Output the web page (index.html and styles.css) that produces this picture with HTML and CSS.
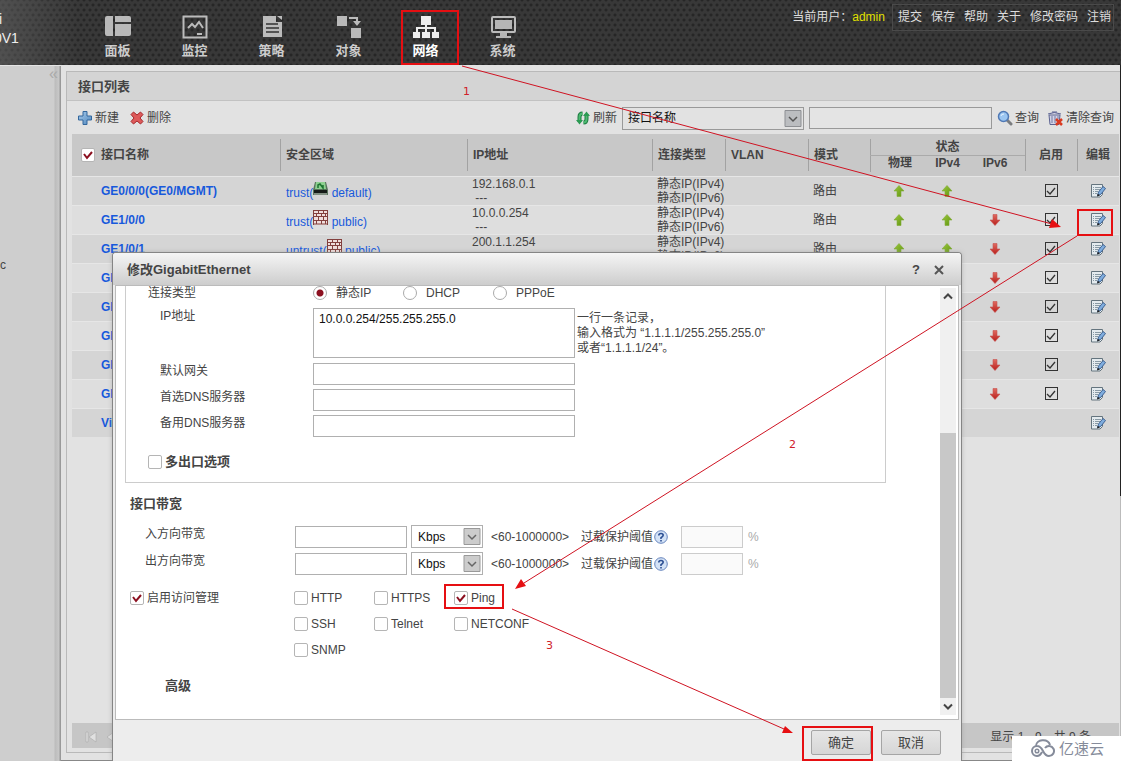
FILE: index.html
```html
<!DOCTYPE html>
<html lang="zh-CN">
<head>
<meta charset="utf-8">
<title>接口列表</title>
<link rel="stylesheet" href="styles.css">
</head>
<body>
<svg class="defs" aria-hidden="true">
  <defs>
    <linearGradient id="green" x1="0" y1="0" x2="1" y2="1"><stop offset="0" stop-color="#9cc83c"/><stop offset="1" stop-color="#5f9410"/></linearGradient>
    <linearGradient id="redg" x1="0" y1="0" x2="0" y2="1"><stop offset="0" stop-color="#e06a60"/><stop offset="1" stop-color="#b81f1c"/></linearGradient>
    <linearGradient id="blue" x1="0" y1="0" x2="1" y2="1"><stop offset="0" stop-color="#a9cdec"/><stop offset="1" stop-color="#4f86bd"/></linearGradient>
    <symbol id="up" viewBox="0 0 12 12"><path d="M6 .5 11 6H8v5.500H4V6H1z" fill="url(#green)" stroke="#7fab35" stroke-width=".6"/></symbol>
    <symbol id="down" viewBox="0 0 12 12"><path d="M6 11.500 11 6H8V.5H4V6H1z" fill="url(#redg)" stroke="#c85450" stroke-width=".6"/></symbol>
    <symbol id="edit" viewBox="0 0 16 16"><path d="M1.500 1.500h11v10l-2.500 2.500H1.500z" fill="#e4ebef" stroke="#64747e"/><path d="M5 4.500h6M5 6.500h5M5 8.500h3M5 10.500h2M3 4.500h1M3 6.500h1M3 8.500h1M3 10.500h1" stroke="#899aa5"/><path d="M7.500 12.500 8.500 9 13 3.500l2.500 2-4.500 5.700z" fill="#7fadde" stroke="#35598a" stroke-width=".9"/><path d="m7 13.500.8-2.800 2.200 1.700z" fill="#222"/></symbol>
    <symbol id="wall" viewBox="0 0 15 15"><path d="M.5.5h14v14H.5z" fill="#f0dedc"/><path d="M0 .5h15M0 3.500h15M0 6.500h15M0 10.500h15M0 14h15M.5 0v15M14.500 0v15M5.500 1v3m5-3v3M3.500 4v3m5-3v3m4-3v3M5.500 7v3m5-3v3M3.500 10v4m5-4v4m4-4v4" stroke="#83403d"/></symbol>
    <symbol id="device" viewBox="0 0 15 15"><path d="M2 1h11l2 8v5H0V9z" fill="#58745b"/><path d="M3 1h9l1 7H2z" fill="#8ed090"/><path d="M5 7V4l2-1 3 4V4" fill="none" stroke="#1d7430" stroke-width="1.500"/><path d="M1 9h13v3H1z" fill="#151a17"/><path d="M1 13h13" stroke="#aaa"/></symbol>
  </defs>
</svg>

<header class="top">
  <div class="brand"><span>i</span><span>0V1</span></div>
  <nav class="nav">
    <a href="#"><svg viewBox="0 0 28 24"><path d="M1 3q0-2 2-2h6v20H3q-2 0-2-2zM11 1h14q2 0 2 2v4H11zM11 9h16v10q0 2-2 2H11z" fill="#b9b9b9"/></svg>面板</a>
    <a href="#"><svg viewBox="0 0 28 24"><path d="M2.500 1.500h23v21h-23z" fill="none" stroke="#bbb" stroke-width="2"/><path d="m7 13 4-4 3 3 4-5 4 6M16 19h5" fill="none" stroke="#bbb" stroke-width="2"/></svg>监控</a>
    <a href="#"><svg viewBox="0 0 28 24"><path d="M5 1h13v6h6v15H5zM19 1h5v4z" fill="#bbb"/><path d="M8 9h12M8 13h13M8 17h13" stroke="#333" stroke-width="1.500"/></svg>策略</a>
    <a href="#"><svg viewBox="0 0 28 24"><path d="M2 1h10v10H2zM16 13h10v10H16z" fill="#b9b9b9"/><path d="M14 3h8v4" fill="none" stroke="#bbb" stroke-width="2"/><path d="M18 6h8l-4 5z" fill="#bbb"/></svg>对象</a>
    <a href="#" class="active"><svg viewBox="0 0 28 24"><path d="M9 1h10v9H9zM1 17h7v6H1zM10 17h8v6h-8zM20 17h7v6h-7z" fill="#eee"/><path d="M14 8v9M5 17v-4h18v4" fill="none" stroke="#eee" stroke-width="2"/></svg>网络</a>
    <a href="#"><svg viewBox="0 0 28 24"><rect x="3" y="2" width="23" height="15" rx="1" fill="none" stroke="#bbb" stroke-width="2"/><path d="M6 5h17v9H6zM11 18h7v3h4v2H7v-2h4z" fill="#b5b5b5"/></svg>系统</a>
  </nav>
  <div class="user">
    <span>当前用户：<b>admin</b></span>
    <div class="links"><a href="#">提交</a><a href="#">保存</a><a href="#">帮助</a><a href="#">关于</a><a href="#">修改密码</a><a href="#">注销</a></div>
  </div>
</header>

<div class="main">
  <aside class="side"><span class="fold">«</span><span class="tree">c</span></aside>
  <main class="content">
    <section class="panel">
      <h1>接口列表</h1>
      <div class="tools">
        <button type="button" class="tool"><svg viewBox="0 0 14 14"><path d="M5 .5h4V5h4.500v4H9v4.500H5V9H.5V5H5z" fill="url(#blue)" stroke="#33679d"/></svg>新建</button>
        <button type="button" class="tool"><svg viewBox="0 0 14 14"><path d="m1 3.500 2.500-2.500L7 4l3.500-3L13 3.500 10 7l3 3.500-2.500 2.500L7 10l-3.500 3L1 10.500 4 7z" fill="#dd5a5a" stroke="#a52a2d"/></svg>删除</button>
        <span class="space"></span>
        <button type="button" class="tool"><svg viewBox="0 0 14 14"><path d="M3.500 11V6q0-3.500 3-3.500M10.500 3v5q0 3.500-3 3.500" fill="none" stroke="#1c7a40" stroke-width="4"/><path d="M3.500 11V6q0-3.500 3-3.500M10.500 3v5q0 3.500-3 3.500" fill="none" stroke="#4cba70" stroke-width="2"/><path d="M0 9h7l-3.500 4.500zM7 5h7L10.500.5z" fill="#2c9a53"/></svg>刷新</button>
        <span class="pick wide"><select aria-label="查询字段"><option>接口名称</option></select><svg viewBox="0 0 17 17"><path d="M.5.5h16v16H.5z" fill="#bbbdc0" stroke="#8d8f93"/><path d="m4.500 7 4 4 4-4" fill="none" stroke="#555" stroke-width="1.500"/></svg></span>
        <input class="query" type="text" aria-label="查询内容">
        <button type="button" class="tool"><svg viewBox="0 0 16 16"><path d="m10 10 4 4" stroke="#7b7d80" stroke-width="3" stroke-linecap="round"/><circle cx="6.500" cy="6.500" r="5" fill="#9cc6f1" stroke="#5079b5" stroke-width="1.500"/><path d="M4 6q0-2 3-2" stroke="#e8f4ff" fill="none"/></svg>查询</button>
        <button type="button" class="tool"><svg viewBox="0 0 16 16"><path d="M2 5h11l-1 9.500H3zM1 4q6-3 13 0M5 2h5" fill="#d4d4e6" stroke="#5b6291"/><path d="M5 6v7m3-7v7m3-7v3" stroke="#737aa4"/><path d="m9 9 6 6m0-6-6 6" stroke="#d93a20" stroke-width="2.500"/></svg>清除查询</button>
      </div>
      <div class="grid">
      <table>
        <colgroup><col class="c-name"><col><col class="c-ip"><col class="c-type"><col class="c-vlan"><col class="c-mode"><col class="c-phy"><col class="c-v4"><col class="c-v6"><col class="c-on"><col class="c-edit"></colgroup>
        <thead>
          <tr><th rowspan="2" class="first"><label><input type="checkbox" class="box" checked>接口名称</label></th><th rowspan="2">安全区域</th><th rowspan="2">IP地址</th><th rowspan="2">连接类型</th><th rowspan="2">VLAN</th><th rowspan="2">模式</th><th colspan="3" class="group">状态</th><th rowspan="2" class="mid">启用</th><th rowspan="2" class="mid">编辑</th></tr>
          <tr><th class="sub edge">物理</th><th class="sub">IPv4</th><th class="sub last">IPv6</th></tr>
        </thead>
        <tbody>
          <tr><td><a href="#">GE0/0/0(GE0/MGMT)</a></td><td class="zone">trust(<svg><use href="#device"/></svg> default)</td><td>192.168.0.1<br>&nbsp;---</td><td>静态IP(IPv4)<br>静态IP(IPv6)</td><td></td><td>路由</td><td class="st p"><svg><use href="#up"/></svg></td><td class="st"><svg><use href="#up"/></svg></td><td></td><td class="st"><input type="checkbox" class="on" aria-label="启用" checked></td><td class="st"><button type="button" aria-label="编辑"><svg><use href="#edit"/></svg></button></td></tr>
          <tr><td><a href="#">GE1/0/0</a></td><td class="zone">trust(<svg><use href="#wall"/></svg> public)</td><td>10.0.0.254<br>&nbsp;---</td><td>静态IP(IPv4)<br>静态IP(IPv6)</td><td></td><td>路由</td><td class="st p"><svg><use href="#up"/></svg></td><td class="st"><svg><use href="#up"/></svg></td><td class="st l"><svg><use href="#down"/></svg></td><td class="st"><input type="checkbox" class="on" aria-label="启用" checked></td><td class="st"><button type="button" aria-label="编辑"><svg><use href="#edit"/></svg></button></td></tr>
          <tr><td><a href="#">GE1/0/1</a></td><td class="zone">untrust(<svg><use href="#wall"/></svg> public)</td><td>200.1.1.254<br>&nbsp;---</td><td>静态IP(IPv4)<br>静态IP(IPv6)</td><td></td><td>路由</td><td class="st p"><svg><use href="#up"/></svg></td><td class="st"><svg><use href="#up"/></svg></td><td class="st l"><svg><use href="#down"/></svg></td><td class="st"><input type="checkbox" class="on" aria-label="启用" checked></td><td class="st"><button type="button" aria-label="编辑"><svg><use href="#edit"/></svg></button></td></tr>
          <tr><td><a href="#">GE1/0/2</a></td><td></td><td></td><td></td><td></td><td></td><td></td><td></td><td class="st l"><svg><use href="#down"/></svg></td><td class="st"><input type="checkbox" class="on" aria-label="启用" checked></td><td class="st"><button type="button" aria-label="编辑"><svg><use href="#edit"/></svg></button></td></tr>
          <tr><td><a href="#">GE1/0/3</a></td><td></td><td></td><td></td><td></td><td></td><td></td><td></td><td class="st l"><svg><use href="#down"/></svg></td><td class="st"><input type="checkbox" class="on" aria-label="启用" checked></td><td class="st"><button type="button" aria-label="编辑"><svg><use href="#edit"/></svg></button></td></tr>
          <tr><td><a href="#">GE1/0/4</a></td><td></td><td></td><td></td><td></td><td></td><td></td><td></td><td class="st l"><svg><use href="#down"/></svg></td><td class="st"><input type="checkbox" class="on" aria-label="启用" checked></td><td class="st"><button type="button" aria-label="编辑"><svg><use href="#edit"/></svg></button></td></tr>
          <tr><td><a href="#">GE1/0/5</a></td><td></td><td></td><td></td><td></td><td></td><td></td><td></td><td class="st l"><svg><use href="#down"/></svg></td><td class="st"><input type="checkbox" class="on" aria-label="启用" checked></td><td class="st"><button type="button" aria-label="编辑"><svg><use href="#edit"/></svg></button></td></tr>
          <tr><td><a href="#">GE1/0/6</a></td><td></td><td></td><td></td><td></td><td></td><td></td><td></td><td class="st l"><svg><use href="#down"/></svg></td><td class="st"><input type="checkbox" class="on" aria-label="启用" checked></td><td class="st"><button type="button" aria-label="编辑"><svg><use href="#edit"/></svg></button></td></tr>
          <tr><td><a href="#">Virtual-if0</a></td><td></td><td></td><td></td><td></td><td></td><td></td><td></td><td></td><td></td><td class="st"><button type="button" aria-label="编辑"><svg><use href="#edit"/></svg></button></td></tr>
        </tbody>
      </table>
      <div class="pager"><svg viewBox="0 0 40 12"><path d="M1 1h2v10H1zM11 1v10L4 6zM29 1v10l-7-5z" fill="#e0e0e0" stroke="#aaa" stroke-width=".6"/></svg><span>显示 1 - 9，共 9 条</span></div>
      </div>
    </section>
  </main>
</div>

<div class="dialog" role="dialog" aria-labelledby="dlg-title">
  <div class="dlg-head"><h2 id="dlg-title">修改GigabitEthernet</h2><button type="button">?</button><button type="button" aria-label="关闭"><svg viewBox="0 0 10 10"><path d="m1 1 8 8m0-8-8 8" stroke="#555" stroke-width="2"/></svg></button></div>
  <div class="dlg-body">
    <form class="form">
      <div class="frame">
        <div class="row type"><span class="lab">连接类型</span><label><input type="radio" name="t" checked>静态IP</label><label><input type="radio" name="t">DHCP</label><label><input type="radio" name="t">PPPoE</label></div>
        <div class="row"><label class="lab in" for="ip">IP地址</label><textarea id="ip">10.0.0.254/255.255.255.0</textarea><p class="hint">一行一条记录，<br>输入格式为 “1.1.1.1/255.255.255.0”<br>或者“1.1.1.1/24”。</p></div>
        <div class="row"><label class="lab in" for="gw">默认网关</label><input type="text" id="gw"></div>
        <div class="row"><label class="lab in" for="d1">首选DNS服务器</label><input type="text" id="d1"></div>
        <div class="row"><label class="lab in" for="d2">备用DNS服务器</label><input type="text" id="d2"></div>
        <label class="check multi"><input type="checkbox" class="box">多出口选项</label>
      </div>
      <h3>接口带宽</h3>
      <div class="band"><label for="bi">入方向带宽</label><input type="text" id="bi"><span class="pick"><select aria-label="入方向单位"><option>Kbps</option></select><svg viewBox="0 0 17 17"><path d="M.5.5h16v16H.5z" fill="#ccc" stroke="#999"/><path d="m4.500 7 4 4 4-4" fill="none" stroke="#666" stroke-width="1.500"/></svg></span><span class="range">&lt;60-1000000&gt;</span><label class="thr" for="ti">过载保护阈值</label><svg class="help" viewBox="0 0 14 14"><circle cx="7" cy="7" r="6.300" fill="#d3e2f6" stroke="#6684bd"/><path d="M4.800 5.500q0-2 2.200-2t2.200 1.800Q9.200 6.500 7 7.700V9M7 10v1.500" fill="none" stroke="#2c4f93" stroke-width="1.600"/></svg><input type="text" id="ti" class="small" disabled><span class="pct">%</span></div>
      <div class="band"><label for="bo">出方向带宽</label><input type="text" id="bo"><span class="pick"><select aria-label="出方向单位"><option>Kbps</option></select><svg viewBox="0 0 17 17"><path d="M.5.5h16v16H.5z" fill="#ccc" stroke="#999"/><path d="m4.500 7 4 4 4-4" fill="none" stroke="#666" stroke-width="1.500"/></svg></span><span class="range">&lt;60-1000000&gt;</span><label class="thr" for="to">过载保护阈值</label><svg class="help" viewBox="0 0 14 14"><circle cx="7" cy="7" r="6.300" fill="#d3e2f6" stroke="#6684bd"/><path d="M4.800 5.500q0-2 2.200-2t2.200 1.800Q9.200 6.500 7 7.700V9M7 10v1.500" fill="none" stroke="#2c4f93" stroke-width="1.600"/></svg><input type="text" id="to" class="small" disabled><span class="pct">%</span></div>
      <div class="access">
        <label class="check"><input type="checkbox" class="box" checked>启用访问管理</label>
        <div class="protos">
          <label class="check"><input type="checkbox" class="box">HTTP</label><label class="check"><input type="checkbox" class="box">HTTPS</label><label class="check"><input type="checkbox" class="box" checked>Ping</label>
          <label class="check"><input type="checkbox" class="box">SSH</label><label class="check"><input type="checkbox" class="box">Telnet</label><label class="check"><input type="checkbox" class="box">NETCONF</label>
          <label class="check"><input type="checkbox" class="box">SNMP</label>
        </div>
      </div>
      <h3 class="adv">高级</h3>
    </form>
    <div class="scroll" aria-hidden="true"><svg viewBox="0 0 16 16"><path d="m4 10 4-4 4 4" fill="none" stroke="#444" stroke-width="2"/></svg><i></i><svg viewBox="0 0 16 16"><path d="m4 6 4 4 4-4" fill="none" stroke="#444" stroke-width="2"/></svg></div>
  </div>
  <div class="dlg-foot"><button type="button">确定</button><button type="button">取消</button></div>
</div>

<div class="mark"><svg viewBox="0 0 28 20"><path d="M8 17a5 5 0 1 1 0-10q3.500 0 6 5t6 5a5 5 0 1 0-4-8M7 7c0-7 12-8 14-1M13 13q-2 4-5 4" fill="none" stroke="#858b9a" stroke-width="2"/><circle cx="8" cy="12" r="1.800" fill="none" stroke="#858b9a" stroke-width="1.500"/></svg>亿速云</div>

<svg class="notes" width="1121" height="761" viewBox="0 0 1121 761">
  <g fill="none" stroke="#e60f12" stroke-width="2"><path d="M402 11h56v53h-56zM1078 210h34v25h-34zM445 585h58v23h-58zM803 727h69v33h-69z"/></g>
  <g stroke="#cf1322" stroke-width="1"><path d="M462 66 1052 224M1077 236 524 583M512 609l272 120"/></g>
  <path d="m1061 227-12 1 3-9zM515 589l6-10 5 7zM793 733l-11 0 3-7z" fill="#e60f12"/>
  <g class="num"><text x="463" y="95">1</text><text x="789" y="448">2</text><text x="546" y="649">3</text></g>
</svg>
</body>
</html>
```
FILE: styles.css
```css
* { box-sizing: border-box; }
body {
  margin: 0; min-height: 100vh; display: flex; flex-direction: column; position: relative; overflow: hidden;
  background: #e2e2e2; color: #444;
  font: 12px/14px "Liberation Sans", "Noto Sans CJK SC", sans-serif;
}
a { color: inherit; text-decoration: none; }
button, input, select, textarea { font: inherit; color: inherit; margin: 0; }
button { padding: 0; border: 0; background: none; }
h1, h2, h3, p { margin: 0; font-size: 13px; line-height: 16px; }
.defs { position: absolute; width: 0; height: 0; }

.top {
  height: 65px; display: flex; align-items: flex-start; color: #ccc;
  background-color: #383838;
  background-image: radial-gradient(circle, #262626 1px, transparent 2px), radial-gradient(circle, #262626 1px, transparent 2px);
  background-size: 6px 10px; background-position: 0 0, 3px 5px;
}
.brand { width: 79px; height: 65px; padding-top: 10px; display: flex; flex-direction: column; background: linear-gradient(90deg, #6668, transparent); }
.brand span { font-size: 14px; line-height: 20px; color: #eee; margin-left: -6px; }
.brand span:first-child { margin-left: -1px; line-height: 18px; }
.nav { display: flex; }
.nav a { width: 77px; padding-top: 15px; display: flex; flex-direction: column; align-items: center; gap: 4px; font-size: 13px; line-height: 16px; font-weight: bold; }
.nav svg { width: 28px; height: 24px; }
.nav .active { color: #fff; }
.user { margin-left: auto; padding: 4px 7px 0 0; display: flex; align-items: center; gap: 7px; color: #ddd; line-height: 25px; white-space: nowrap; }
.user b { font-weight: normal; color: #e0e000; }
.links { display: flex; gap: 9px; padding: 0 2px 0 5px; border: 1px solid #4a4a4a; }

.main { flex: 1; display: flex; }
.side { width: 61px; background: linear-gradient(90deg, transparent 54px, #bcbcbc 55px, #c8c8c8 59px, #999 60px), #cecece; border-top: 1px solid #e4e4e4; display: flex; flex-direction: column; }
.fold { align-self: flex-end; color: #aaa; font-size: 16px; line-height: 16px; padding-right: 3px; }
.tree { margin-top: 176px; }
.content {
  flex: 1; min-width: 0; padding: 6px 1px 7px 5px; display: flex; border-bottom: 1px solid #888;
  background: linear-gradient(#222 62%, #bbb 62%) right top / 1px 100% no-repeat;
}
.panel { flex: 1; min-width: 0; display: flex; flex-direction: column; border: 1px solid #b9b9b9; border-right: 0; }
.panel h1 { background: #d4d4d4; border-bottom: 1px solid #c2c2c2; padding: 7px 11px 5px; }
.tools { height: 33px; display: flex; align-items: center; padding: 1px 6px 0 11px; }
.tool { display: flex; align-items: center; gap: 3px; margin-right: 11px; white-space: nowrap; }
.tool svg { width: 14px; height: 14px; }
.tool:last-child { margin-right: 0; }
.space { flex: 1; }
.space + .tool { margin-right: 5px; }
.query + .tool svg, .tool:last-child svg { width: 16px; height: 16px; }
.query + .tool { margin-right: 8px; gap: 2px; }
input[type="text"], textarea { border: 1px solid #b0b0b0; border-radius: 0; background: #fff; padding: 3px 5px; }
.tools .query { width: 183px; height: 22px; margin: 0 5px; background: #e4e4e4; border-color: #999; }
.pick { position: relative; display: block; width: 72px; height: 23px; }
.pick select { appearance: none; width: 100%; height: 100%; border: 1px solid #b0b0b0; border-radius: 0; background: #fff; color: #111; padding: 0 6px; }
.pick svg { position: absolute; right: 2px; top: 3px; width: 18px; height: 17px; pointer-events: none; }
.wide { width: 182px; }
.wide select { background: #e2e2e2; border-color: #999; padding: 0 5px; }

.grid { flex: 1; display: flex; flex-direction: column; justify-content: space-between; padding: 0 1px 4px 5px; }
table { width: 100%; table-layout: fixed; border-collapse: collapse; }
.c-name { width: 208px; } .c-ip { width: 185px; } .c-type { width: 73px; } .c-vlan { width: 83px; } .c-mode { width: 62px; }
.c-phy { width: 54px; } .c-v4 { width: 47px; } .c-v6 { width: 54px; } .c-on { width: 52px; } .c-edit { width: 42px; }
thead { background: #c8c8c8; }
th { height: 21px; padding: 0 0 0 6px; text-align: left; background: linear-gradient(#a2a2a2, #a2a2a2) left center / 1px 32px no-repeat; }
th.first { padding-left: 9px; background: none; }
th.first label { display: flex; align-items: center; gap: 6px; }
th.mid { text-align: center; padding: 0; }
th.group { text-align: center; padding: 5px 0 0; border-bottom: 1px solid #aaa; background-position: left bottom; background-size: 1px 16px; }
th.sub { text-align: center; padding: 0 0 5px; background: none; }
th.edge { padding-left: 6px; background: linear-gradient(#a2a2a2, #a2a2a2) left top / 1px 16px no-repeat; }
th.last { padding-right: 6px; }
tbody tr { background: #d5d5d5; border-top: 1px solid #e6e6e6; }
tbody tr:nth-child(even) { background: #dedede; }
td { height: 29px; padding: 0 0 0 5px; white-space: nowrap; }
td:first-child { padding-left: 29px; font-weight: bold; color: #1759dc; }
td.zone { color: #1759dc; padding-left: 6px; }
.zone svg { width: 15px; height: 15px; vertical-align: 1px; }
td.st { padding: 0; text-align: center; }
td.p { padding-left: 5px; }
td.l { padding-right: 6px; }
.st svg { width: 12px; height: 12px; display: block; margin: 0 auto; }
.st button { display: block; margin: 0 auto; }
.st button svg { width: 16px; height: 16px; }
input[type="checkbox"], input[type="radio"] { appearance: none; display: block; flex: none; width: 14px; height: 14px; border: 1px solid #b5b5b5; border-radius: 2px; background: #fff center / 12px 12px no-repeat; }
.box:checked { background-image: url("data:image/svg+xml,%3Csvg xmlns='http://www.w3.org/2000/svg' viewBox='0 0 12 12'%3E%3Cpath d='M2 5l3 4 5-6' fill='none' stroke='%238c1020' stroke-width='2'/%3E%3C/svg%3E"); }
input.on { width: 13px; height: 13px; margin: 0 auto; border-color: #333; border-radius: 0; background-color: transparent; }
.on:checked { background-image: url("data:image/svg+xml,%3Csvg xmlns='http://www.w3.org/2000/svg' viewBox='0 0 12 12'%3E%3Cpath d='M2 6l3 3 5-6' fill='none' stroke='%23333' stroke-width='1.300'/%3E%3C/svg%3E"); }
.pager { height: 25px; background: #c6c6c6; display: flex; align-items: center; justify-content: space-between; padding: 3px 28px 0 13px; }
.pager svg { width: 40px; height: 12px; }

.dialog { position: absolute; left: 112px; right: 159px; top: 252px; bottom: 0; display: flex; flex-direction: column; background: #ededed; border: 1px solid #858585; border-bottom: 0; border-radius: 4px 4px 0 0; padding: 0 2px; box-shadow: 0 0 4px #9998; }
.dlg-head { height: 32px; margin: 0 -2px; padding: 1px 17px 0 14px; display: flex; align-items: center; gap: 13px; background: linear-gradient(#f5f5f5, #cdcdcd); border-radius: 3px 3px 0 0; }
.dlg-head h2 { flex: 1; }
.dlg-head button { width: 10px; font-weight: bold; font-size: 13px; }
.dlg-head svg { width: 10px; height: 10px; display: block; }
.dlg-body { flex: 1; min-height: 0; overflow: hidden; display: flex; background: #fff; border: 1px solid #bbb; }
.form { flex: 1; padding-left: 9px; min-width: 0; }
.frame { margin-right: 54px; padding-left: 22px; height: 197px; border: 1px solid #ccc; border-top: 0; }
.row { display: flex; align-items: flex-start; margin-bottom: 4px; }
.row .lab { width: 165px; padding-top: 1px; }
.row .in { padding-left: 12px; }
.row.type { height: 18px; }
.type label { display: flex; align-items: center; gap: 9px; width: 90px; height: 14px; }
.row.type .lab { padding: 0; }
input[type="radio"] { border-radius: 50%; border-color: #aaa; }
input[type="radio"]:checked { background: radial-gradient(circle, #8c1020 3px, #fff 4px); }
.row input[type="text"] { width: 262px; height: 22px; }
.row textarea { width: 262px; height: 50px; resize: none; color: #111; margin-bottom: 1px; display: block; }
.hint { font-size: 12px; line-height: 15px; padding: 3px 0 0 2px; white-space: nowrap; }
.check { display: flex; align-items: center; gap: 3px; white-space: nowrap; height: 14px; }
.multi { margin-top: 18px; font-weight: bold; font-size: 13px; }
.form h3 { margin: 13px 0 13px 5px; }
.band { display: flex; align-items: center; height: 23px; margin-bottom: 4px; padding-left: 20px; white-space: nowrap; }
.band > label:first-child { width: 150px; align-self: flex-start; padding-top: 2px; }
.band > input { width: 112px; height: 22px; }
.band > .small { width: 62px; background: #fafafa; border-color: #ccc; }
.band .pick { margin: 0 8px 0 4px; }
.range { width: 90px; }
.thr { width: 73px; }
.help { width: 14px; height: 14px; margin-right: 13px; }
.pct { color: #aaa; padding-left: 5px; }
.access { display: flex; padding: 12px 0 0 5px; }
.access > .check { width: 164px; }
.protos { display: grid; grid-template-columns: repeat(3, 80px); row-gap: 12px; }
.form .adv { margin: 21px 0 0 40px; }
.scroll { width: 16px; margin: 2px 2px 4px 0; display: flex; flex-direction: column; background: #f0f0f0; }
.scroll svg { width: 16px; height: 17px; }
.scroll i { margin-top: auto; height: 62%; background: #c8c8c8; }
.dlg-foot { height: 41px; padding: 10px 18px 0 0; display: flex; gap: 10px; justify-content: flex-end; align-items: flex-start; }
.dlg-foot button { width: 60px; height: 25px; border: 1px solid #a5a5a5; border-radius: 2px; background: linear-gradient(#e6e6e6, #d6d6d6); font-size: 13px; }

.mark { position: absolute; right: 0; bottom: 0; width: 109px; height: 25px; background: #fff; display: flex; align-items: center; gap: 2px; padding-left: 17px; font-size: 15px; color: #858b9a; white-space: nowrap; }
.mark svg { width: 28px; height: 20px; }
.notes { position: absolute; left: 0; top: 0; pointer-events: none; }
.num { font: 11px "DejaVu Sans", sans-serif; fill: #d0202a; }
```
